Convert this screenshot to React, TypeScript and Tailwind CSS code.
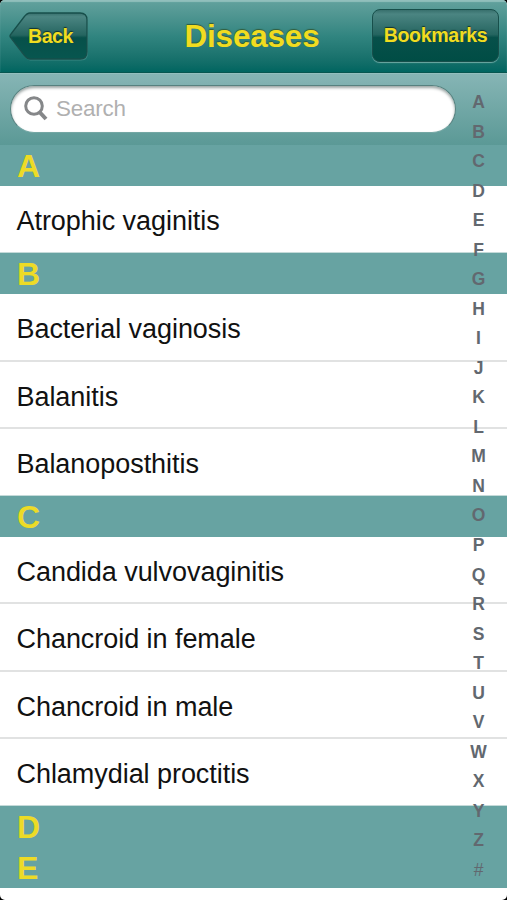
const sections: { letter: string; items: string[] }[] = [
  { letter: "A", items: ["Atrophic vaginitis"] },
  { letter: "B", items: ["Bacterial vaginosis", "Balanitis", "Balanoposthitis"] },
  {
    letter: "C",
    items: ["Candida vulvovaginitis", "Chancroid in female", "Chancroid in male", "Chlamydial proctitis"],
  },
  { letter: "D", items: [] },
  { letter: "E", items: [] },
];

const indexLetters = "ABCDEFGHIJKLMNOPQRSTUVWXYZ#".split("");

function BackButton() {
  return (
    <button className="relative ml-[9px] mt-[11px] h-[49px] w-20 text-left">
      <svg className="absolute inset-0" width="80" height="50" viewBox="0 0 80 50">
        <defs>
          <linearGradient id="back" x1="0" y1="0" x2="0" y2="1">
            <stop offset="0" stopColor="#38706d" />
            <stop offset="0.08" stopColor="#4b8582" />
            <stop offset="0.48" stopColor="#256560" />
            <stop offset="0.54" stopColor="#07504a" />
            <stop offset="1" stopColor="#07564f" />
          </linearGradient>
        </defs>
        <path
          d="M21 3 H72 Q79 3 79 10 V42 Q79 49.5 72 49.5 H21 Q18 49 15 45 L2 28 Q0 26 2 24 L15 7 Q18 3 21 3Z"
          fill="#6fa9a4"
          opacity="0.4"
        />
        <path
          d="M21 2 H71 Q78 2 78 9 V41 Q78 48 71 48 H21 Q18 48 15 44 L2 27 Q0 25 2 23 L15 6 Q18 2 21 2Z"
          fill="url(#back)"
          stroke="#174f4b"
          strokeWidth="1.3"
        />
      </svg>
      <span className="relative ml-[19px] block text-[19.6px] font-bold leading-[50px] tracking-[-0.5px] [text-shadow:0_-1px_1px_#12332e]">
        Back
      </span>
    </button>
  );
}

export default function App() {
  return (
    <div className="relative h-[900px] w-[507px] overflow-hidden bg-black font-['Liberation_Sans',Arial,sans-serif]">
      <div className="flex h-[900px] flex-col overflow-hidden rounded-[5px] bg-white">
        <header className="grid h-[73px] shrink-0 grid-cols-[1fr_auto_1fr] border-b border-[#075650] bg-linear-to-b from-[#63a29e] via-[#318580] via-50% to-[#006560] text-[#f0dc20] shadow-[inset_0_2px_1px_#91bfbc]">
          <BackButton />
          <h1 className="mr-[3px] text-[31.5px] font-bold leading-[73px] tracking-[-0.2px] [text-shadow:0_-1.5px_1px_#315c3b]">
            Diseases
          </h1>
          <button className="mr-[8px] mt-[9px] h-[53px] w-[127px] justify-self-end rounded-[8px] border-[1.5px] border-[#174f4b] bg-[linear-gradient(#38706d,#4b8582_8%,#256560_48%,#07504a_54%,#004d45)] text-[19.6px] font-bold leading-[51px] tracking-[-0.35px] shadow-[0_1px_1px_#6fa9a4] [text-shadow:0_-1px_1px_#12332e]">
            Bookmarks
          </button>
        </header>

        <div className="h-[72px] shrink-0 border-t border-[#93bfbe] bg-[linear-gradient(#86b5b5,#5b9996)] pl-[10px] pt-[11px]">
          <div className="flex h-[48px] w-[446px] items-center rounded-full border-[1.5px] border-[#56817f] border-b-[#74a7a4] bg-white pl-[13px] shadow-[inset_0_2px_3px_#9ba5a4]">
            <svg width="24" height="26" viewBox="0 0 24 26" fill="none" stroke="#858789">
              <circle cx="10" cy="10" r="8.3" strokeWidth="3" />
              <path d="M15.5 16 L22 23" strokeWidth="4" />
            </svg>
            <span className="ml-[8px] text-[22.4px] leading-[48px] tracking-[-0.2px] text-[#b0b0b0]">Search</span>
          </div>
        </div>

        <main>
          {sections.map((section) => (
            <section key={section.letter}>
              <h2 className="h-[41px] bg-[#67a3a2] pl-[17px] text-[32px] font-bold leading-[43px] text-[#eddb26]">
                {section.letter}
              </h2>
              <ul>
                {section.items.map((item) => (
                  <li
                    key={item}
                    className="h-[67.3px] border-b-2 border-[#e1e2e2] pl-[16.5px] text-[27px] leading-[70px] tracking-[-0.05px] text-[#111] last:border-b last:border-[#c4dad9]"
                  >
                    {item}
                  </li>
                ))}
              </ul>
            </section>
          ))}
        </main>
      </div>

      <nav className="absolute right-[8.5px] top-[88px] flex w-10 flex-col text-center text-[17.5px] font-bold text-[#62686f]">
        {indexLetters.map((letter) => (
          <span key={letter} className="h-[29.54px] leading-[29.54px] last:font-normal">
            {letter}
          </span>
        ))}
      </nav>
    </div>
  );
}
